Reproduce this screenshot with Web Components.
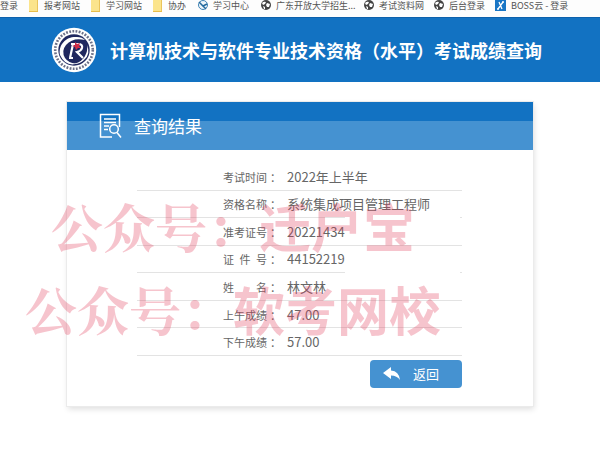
<!DOCTYPE html>
<html lang="zh-CN">
<head>
<meta charset="utf-8">
<title>考试成绩查询</title>
<style>
body{margin:0;background:#fff;color:#666;font-family:"Noto Sans CJK SC",sans-serif;--blue:#1272c2;--light:#4592d1}
</style>
</head>
<body>
<score-page></score-page>
<script>
const define=(name,html,setup)=>customElements.define(name,class extends HTMLElement{
  constructor(){
    super();
    const t=document.createElement('template');
    t.innerHTML=html;
    this.attachShadow({mode:'open'}).append(t.content.cloneNode(true));
  }
  connectedCallback(){if(setup)setup(this,this.shadowRoot)}
});

const icons={
  folder:'<path fill="#eac45c" d="M2 0h8v12H2z"/><path fill="#fbe48c" d="M1 0h8v12H1z"/><path fill="#e9bd4b" d="M1 11h9v1H1z"/>',
  study:'<circle cx="6" cy="5" r="4.5" fill="#eef5fa" stroke="#3e83b5"/><path d="M2 2l4 4 4-2M6 6l3 3" stroke="#246a9e" stroke-width="1.5" fill="none"/>',
  globe:'<circle cx="6" cy="5" r="5" fill="#444"/><path d="M2 3q2-2 4-1l-1 2-2 1zm5 0l3 1-1 3-2 0-1-2zM3 6l2 1 0 2-1 0z" fill="#fff"/>',
  boss:'<path fill="#1976c5" d="M0 0h11v11H0z"/><path d="M3 9L8 2M4 2l3 7M2 9h2M7 2h2" stroke="#fff" stroke-width="1.3" fill="none"/>'
};
define('bookmark-link',`
<style>
:host{display:block}
a{display:flex;align-items:center;gap:4px;color:#555;text-decoration:none;font-size:9px;line-height:12px;white-space:nowrap}
svg{width:12px;height:12px;flex:none}
</style>
<a href="#"><svg viewBox="0 0 12 12"></svg><slot></slot></a>`,(el,root)=>{
  const svg=root.querySelector('svg');
  if(el.getAttribute('icon'))svg.innerHTML=icons[el.getAttribute('icon')];else svg.remove();
});

define('bookmark-bar',`
<style>
:host{display:grid;grid-template-columns:28px 62px 62px 45px 63px 103px 70px 62px 1fr;height:17px;overflow:hidden;background:#fdfdfd}
</style>
<bookmark-link>登录</bookmark-link>
<bookmark-link icon="folder">报考网站</bookmark-link>
<bookmark-link icon="folder">学习网站</bookmark-link>
<bookmark-link icon="folder">协办</bookmark-link>
<bookmark-link icon="study">学习中心</bookmark-link>
<bookmark-link icon="globe">广东开放大学招生...</bookmark-link>
<bookmark-link icon="globe">考试资料网</bookmark-link>
<bookmark-link icon="globe">后台登录</bookmark-link>
<bookmark-link icon="boss">BOSS云 - 登录</bookmark-link>`);

define('site-header',`
<style>
:host{display:flex;align-items:center;gap:13px;padding:9px 51px;background:var(--blue);border-top:1px solid #0d61ac;box-sizing:border-box}
svg{width:46px;height:46px;flex:none}
h1{margin:0;color:#fff;font-size:18px;line-height:24px;font-weight:700;white-space:nowrap}
</style>
<svg viewBox="0 0 46 46" aria-hidden="true">
<circle cx="23" cy="23" r="22.2" fill="#fff"/>
<circle cx="23" cy="23" r="18.8" fill="none" stroke="#6d7189" stroke-width="2.6" stroke-dasharray="1.8 1.4"/>
<circle cx="23" cy="23" r="15.7" fill="#20285f"/>
<path d="M9 28C7 17 16 9 26 10q5 0 8 3Q22 10 15 18q-5 6-1 13 5 7 14 5-13 5-19-8z" fill="#fff"/>
<path d="M36 18q4 9-3 15-4 4-10 4 9-3 11-8 3-5 2-11z" fill="#fff"/>
<path d="M19 31l3-14h5q5 0 4 4-1 3-5 4l6 6M20 17h5M18 31h4" fill="none" stroke="#fff" stroke-width="2.2"/>
<path d="M24 15l2 2 3-1-1 3 2 2-3 0-2 2-1-3-3-1 3-1z" fill="#d12c46"/>
</svg>
<h1><slot></slot></h1>`);

define('result-header',`
<style>
:host{display:flex;align-items:center;gap:11px;height:48px;padding-left:32px;background:linear-gradient(var(--blue) 0 19px,var(--light) 19px)}
svg{width:24px;height:26px;flex:none}
h2{margin:0;color:#fff;font-size:17px;line-height:24px;font-weight:400}
</style>
<svg viewBox="0 0 24 26" fill="none" stroke="#fff" stroke-width="1.5" aria-hidden="true"><path d="M13 24H1.500V1.500H20.500V14M5 6h12M5 9.500h12M5 13h5M5 16.500h4"/><circle cx="15" cy="16" r="4.300"/><path d="M18 19.500l4 5"/></svg>
<h2><slot></slot></h2>`);

define('result-table',`
<style>
:host{display:block}
table{width:100%;height:193px;border-spacing:0;table-layout:fixed}
th,td{padding:0;font-weight:400;line-height:20px;background:linear-gradient(#e3e3e3,#e3e3e3) bottom/100% 1px no-repeat}
th{width:144px;font-size:11px;text-align:right}
th span{display:inline-block;width:44px;margin-right:3px;text-align:justify;text-align-last:justify}
td{padding-left:6px;font-size:13px;white-space:nowrap}
.gap td{background-image:linear-gradient(90deg,#e3e3e3 64px,transparent 64px 179px,#e3e3e3 179px)}
.cut{display:block;width:58px;overflow:hidden}
</style>
<table>
<tr><th scope="row"><span>考试时间</span>：</th><td>2022年上半年</td></tr>
<tr class="gap"><th scope="row"><span>资格名称</span>：</th><td>系统集成项目管理工程师</td></tr>
<tr><th scope="row"><span>准考证号</span>：</th><td><span class="cut">20221434</span></td></tr>
<tr class="gap"><th scope="row"><span>证 件 号</span>：</th><td><span class="cut">44152219</span></td></tr>
<tr><th scope="row"><span>姓 名</span>：</th><td>林文林</td></tr>
<tr><th scope="row"><span>上午成绩</span>：</th><td>47.00</td></tr>
<tr><th scope="row"><span>下午成绩</span>：</th><td>57.00</td></tr>
</table>`);

define('back-button',`
<style>
:host{display:block}
button{display:flex;align-items:center;gap:13px;width:92px;height:28px;padding:0 0 0 13px;border:0;border-radius:4px;background:var(--light);color:#fff;font:400 13px/20px "Noto Sans CJK SC",sans-serif}
svg{width:17px;height:14px;flex:none}
</style>
<button type="button"><svg viewBox="0 0 17 14" aria-hidden="true"><path d="M0 6L8 0v3.500q8 .5 9 9.500-3-4.500-9-4.500V12z" fill="#fff"/></svg><slot></slot></button>`);

define('result-card',`
<style>
:host{display:block;margin:20px 67px 0;background:#fff;box-shadow:0 0 0 1px #ebebeb,1px 3px 6px #ddd}
.body{padding:13px 71px 18px 70px}
back-button{display:flex;justify-content:flex-end;margin-top:4px}
</style>
<result-header>查询结果</result-header>
<div class="body"><result-table></result-table><back-button>返回</back-button></div>`);

define('water-mark',`
<style>
:host{display:flex;position:absolute;color:rgba(225,60,90,.3);font-size:52px;line-height:60px;font-weight:700;white-space:nowrap;pointer-events:none}
.id{font-family:"Noto Serif CJK SC","Noto Sans CJK SC",serif}
</style>
<span class="id">公众号：</span><slot></slot>`);

define('score-page',`
<style>
:host{display:block;position:relative;overflow:hidden;padding-bottom:58px}
.first{left:51px;top:196px}
.second{left:25px;top:279px}
</style>
<bookmark-bar></bookmark-bar>
<site-header>计算机技术与软件专业技术资格（水平）考试成绩查询</site-header>
<result-card></result-card>
<water-mark class="first">迁户宝</water-mark>
<water-mark class="second">软考网校</water-mark>`);
</script>
</body>
</html>
